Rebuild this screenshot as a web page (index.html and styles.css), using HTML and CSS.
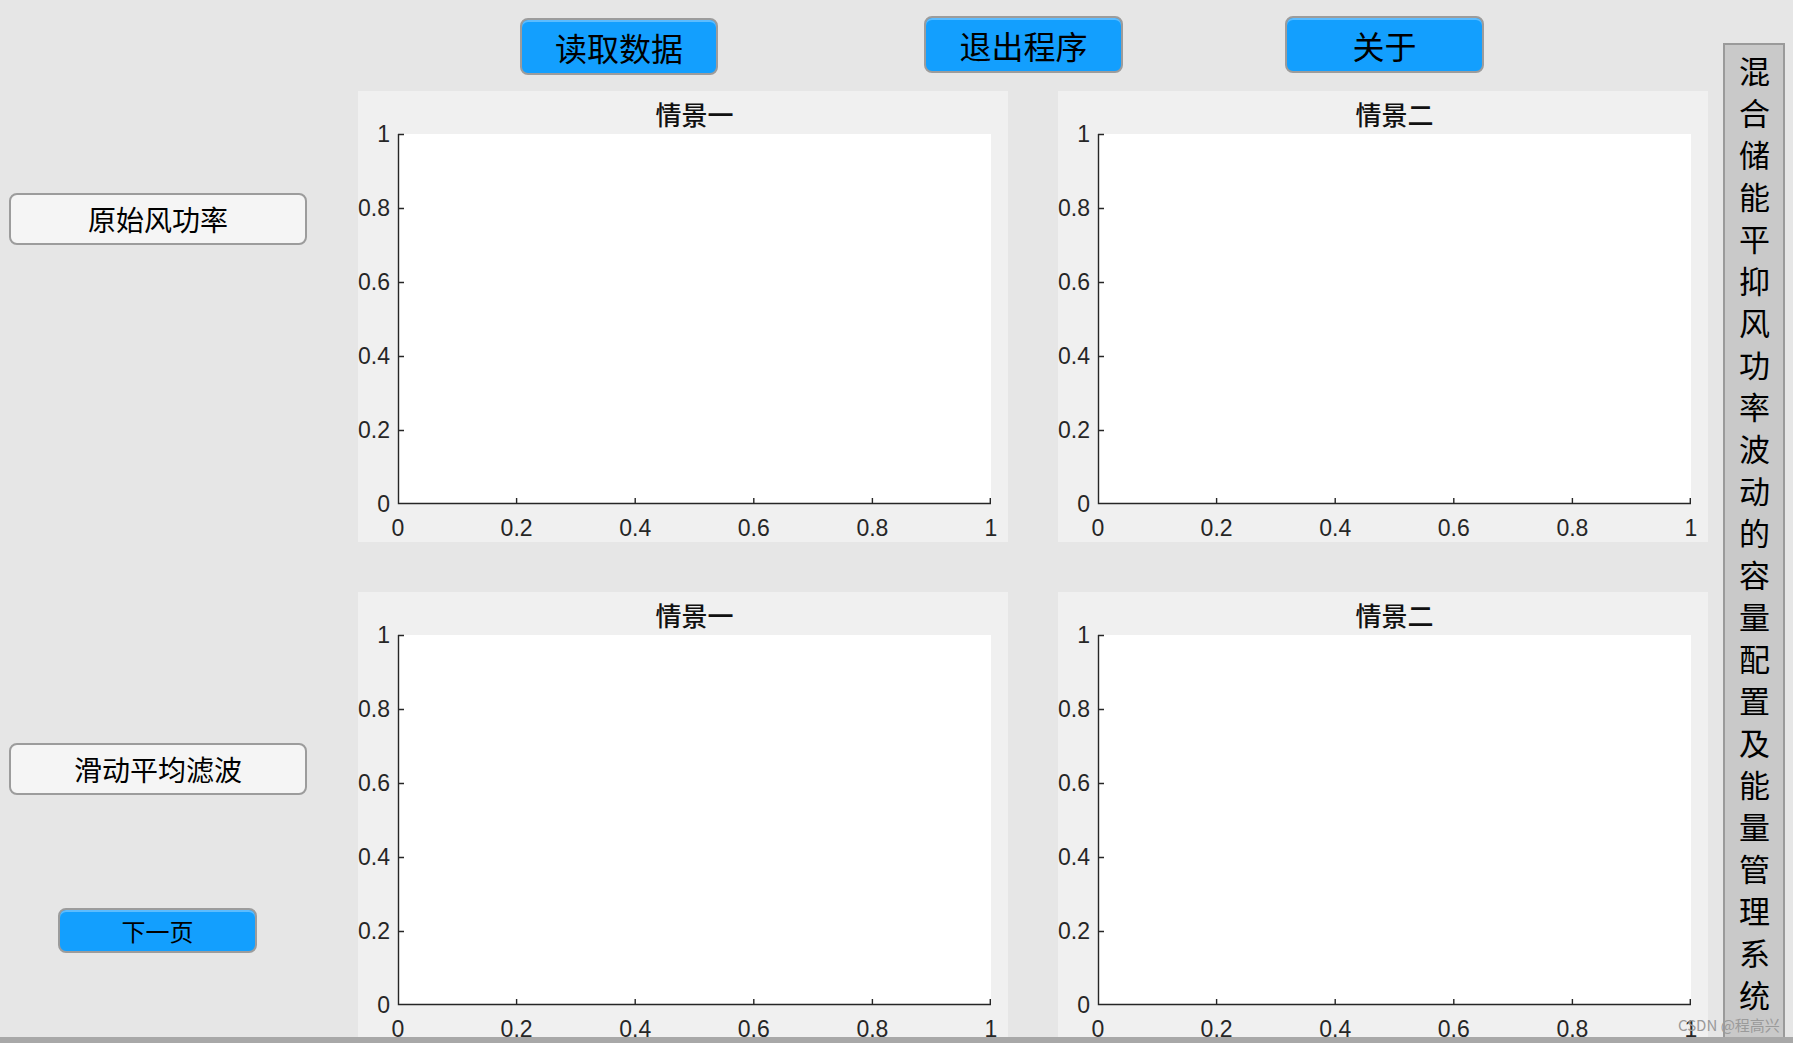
FILE: index.html
```html
<!DOCTYPE html>
<html lang="zh-CN">
<head>
<meta charset="utf-8">
<title>混合储能平抑风功率波动的容量配置及能量管理系统</title>
<link rel="stylesheet" href="styles.css">
</head>
<body>
<div class="window">
  <div class="app">
    <aside class="side">
      <button class="btn btn-light btn-raw">原始风功率</button>
      <button class="btn btn-light btn-filter">滑动平均滤波</button>
      <button class="btn btn-blue btn-next">下一页</button>
    </aside>
    <main class="main">
      <div class="toolbar">
        <button class="btn btn-blue btn-top btn-read">读取数据</button>
        <button class="btn btn-blue btn-top btn-exit">退出程序</button>
        <button class="btn btn-blue btn-top btn-about">关于</button>
      </div>
      <div class="grid">
        <div class="panel">
          <svg class="axes" width="650" height="451" viewBox="0 0 650 451">
            <rect x="40" y="43" width="593" height="370" fill="#fff"/>
            <path class="ax" d="M40.5 43 V412.5 H633 M40 43.5 h6 M40 117.5 h6 M40 191.5 h6 M40 265.5 h6 M40 339.5 h6 M158.6 413 v-6 M277.2 413 v-6 M395.8 413 v-6 M514.4 413 v-6 M632.3 413 v-6"/>
            <text class="tt" x="336.5" y="34">情景一</text>
            <g class="yl"><text x="32" y="51">1</text><text x="32" y="125">0.8</text><text x="32" y="199">0.6</text><text x="32" y="273">0.4</text><text x="32" y="347">0.2</text><text x="32" y="421">0</text></g>
            <g class="xl"><text x="40" y="445">0</text><text x="158.6" y="445">0.2</text><text x="277.2" y="445">0.4</text><text x="395.8" y="445">0.6</text><text x="514.4" y="445">0.8</text><text x="633" y="445">1</text></g>
          </svg>
        </div>
        <div class="panel">
          <svg class="axes" width="650" height="451" viewBox="0 0 650 451">
            <rect x="40" y="43" width="593" height="370" fill="#fff"/>
            <path class="ax" d="M40.5 43 V412.5 H633 M40 43.5 h6 M40 117.5 h6 M40 191.5 h6 M40 265.5 h6 M40 339.5 h6 M158.6 413 v-6 M277.2 413 v-6 M395.8 413 v-6 M514.4 413 v-6 M632.3 413 v-6"/>
            <text class="tt" x="336.5" y="34">情景二</text>
            <g class="yl"><text x="32" y="51">1</text><text x="32" y="125">0.8</text><text x="32" y="199">0.6</text><text x="32" y="273">0.4</text><text x="32" y="347">0.2</text><text x="32" y="421">0</text></g>
            <g class="xl"><text x="40" y="445">0</text><text x="158.6" y="445">0.2</text><text x="277.2" y="445">0.4</text><text x="395.8" y="445">0.6</text><text x="514.4" y="445">0.8</text><text x="633" y="445">1</text></g>
          </svg>
        </div>
        <div class="panel">
          <svg class="axes" width="650" height="451" viewBox="0 0 650 451">
            <rect x="40" y="43" width="593" height="370" fill="#fff"/>
            <path class="ax" d="M40.5 43 V412.5 H633 M40 43.5 h6 M40 117.5 h6 M40 191.5 h6 M40 265.5 h6 M40 339.5 h6 M158.6 413 v-6 M277.2 413 v-6 M395.8 413 v-6 M514.4 413 v-6 M632.3 413 v-6"/>
            <text class="tt" x="336.5" y="34">情景一</text>
            <g class="yl"><text x="32" y="51">1</text><text x="32" y="125">0.8</text><text x="32" y="199">0.6</text><text x="32" y="273">0.4</text><text x="32" y="347">0.2</text><text x="32" y="421">0</text></g>
            <g class="xl"><text x="40" y="445">0</text><text x="158.6" y="445">0.2</text><text x="277.2" y="445">0.4</text><text x="395.8" y="445">0.6</text><text x="514.4" y="445">0.8</text><text x="633" y="445">1</text></g>
          </svg>
        </div>
        <div class="panel">
          <svg class="axes" width="650" height="451" viewBox="0 0 650 451">
            <rect x="40" y="43" width="593" height="370" fill="#fff"/>
            <path class="ax" d="M40.5 43 V412.5 H633 M40 43.5 h6 M40 117.5 h6 M40 191.5 h6 M40 265.5 h6 M40 339.5 h6 M158.6 413 v-6 M277.2 413 v-6 M395.8 413 v-6 M514.4 413 v-6 M632.3 413 v-6"/>
            <text class="tt" x="336.5" y="34">情景二</text>
            <g class="yl"><text x="32" y="51">1</text><text x="32" y="125">0.8</text><text x="32" y="199">0.6</text><text x="32" y="273">0.4</text><text x="32" y="347">0.2</text><text x="32" y="421">0</text></g>
            <g class="xl"><text x="40" y="445">0</text><text x="158.6" y="445">0.2</text><text x="277.2" y="445">0.4</text><text x="395.8" y="445">0.6</text><text x="514.4" y="445">0.8</text><text x="633" y="445">1</text></g>
          </svg>
        </div>
      </div>
    </main>
    <div class="vtitle">混合储能平抑风功率波动的容量配置及能量管理系统</div>
  </div>
  <div class="statusbar"></div>
  <div class="watermark">CSDN @程高兴</div>
</div>
</body>
</html>
```

FILE: styles.css
```css
html, body {
  margin: 0;
  padding: 0;
}
body {
  width: 1793px;
  height: 1043px;
  overflow: hidden;
  background: #e6e6e6;
  font-family: "Noto Sans CJK SC", "Liberation Sans", sans-serif;
}
.window {
  position: relative;
  display: flex;
  flex-direction: column;
  height: 1043px;
}
.app {
  flex: 1;
  min-height: 0;
  display: flex;
  overflow: hidden;
}
.statusbar {
  height: 6px;
  background: #a8a8a8;
}
.btn {
  box-sizing: border-box;
  padding: 0;
  margin: 0;
  display: flex;
  align-items: center;
  justify-content: center;
  color: #000;
  font-family: "Noto Sans CJK SC", sans-serif;
  border: 2px solid #9c9c9c;
  border-radius: 8px;
  line-height: 1;
}
.btn-blue {
  background: #139ffe;
  box-shadow: inset 0 2px 0 #5cbcff;
}
.btn-light {
  background: #f5f5f5;
}

/* left column */
.side {
  width: 358px;
  flex: none;
  display: flex;
  flex-direction: column;
  padding-left: 9px;
  box-sizing: border-box;
}
.btn-raw, .btn-filter {
  width: 298px;
  height: 52px;
  font-size: 28px;
}
.btn-raw { margin-top: 193px; }
.btn-filter { margin-top: 498px; }
.btn-next {
  width: 199px;
  height: 45px;
  margin-top: 113px;
  margin-left: 49px;
  font-size: 24px;
}

/* main area */
.main {
  width: 1350px;
  flex: none;
  display: flex;
  flex-direction: column;
}
.toolbar {
  height: 91px;
  flex: none;
  display: flex;
  align-items: flex-start;
}
.btn-top {
  width: 199px;
  height: 57px;
  font-size: 32px;
  margin-top: 16px;
}
.btn-read { margin-left: 162px; margin-top: 18px; width: 198px; }
.btn-exit { margin-left: 206px; }
.btn-about { margin-left: 162px; }

.grid {
  display: grid;
  grid-template-columns: 650px 650px;
  grid-template-rows: 451px 451px;
  column-gap: 50px;
  row-gap: 50px;
}
.panel {
  background: #f0f0f0;
  overflow: hidden;
}
.axes {
  display: block;
}
.ax {
  fill: none;
  stroke: #262626;
  stroke-width: 1.4;
}
.axes text {
  font-family: "Liberation Sans", Arial, sans-serif;
  font-size: 23px;
  fill: #262626;
}
.yl text { text-anchor: end; }
.xl text { text-anchor: middle; }
.axes .tt {
  font-family: "Noto Sans CJK SC", sans-serif;
  font-size: 26px;
  font-weight: 500;
  fill: #111;
  text-anchor: middle;
}

/* vertical title */
.vtitle {
  flex: none;
  box-sizing: border-box;
  width: 62px;
  margin-left: 15px;
  margin-top: 43px;
  height: 1100px;
  background: #c9c9c9;
  border: 2px solid #9a9a9a;
  writing-mode: vertical-rl;
  text-orientation: upright;
  font-size: 31px;
  letter-spacing: 11px;
  line-height: 58px;
  padding-top: 11px;
  color: #000;
}

.watermark {
  position: absolute;
  left: 1678px;
  top: 1015px;
  font-family: "Noto Sans CJK SC", "Liberation Sans", sans-serif;
  font-size: 15px;
  line-height: 20px;
  color: #9a9a9a;
  white-space: nowrap;
}
```
